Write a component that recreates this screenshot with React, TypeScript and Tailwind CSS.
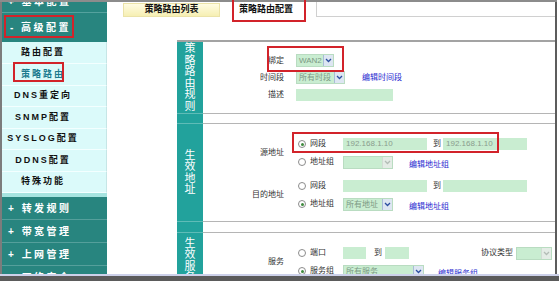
import React from "react";

const SUBMENU = [
  { label: "路由配置", h: "h-[22px]" },
  { label: "策略路由", h: "h-[22px]", active: true },
  { label: "DNS重定向", h: "h-[21px]" },
  { label: "SNMP配置", h: "h-[22px]" },
  { label: "SYSLOG配置", h: "h-[21px]" },
  { label: "DDNS配置", h: "h-[22px]" },
  { label: "特殊功能", h: "h-[21px]" },
];

const BOTTOM_MENU = ["转发规则", "带宽管理", "上网管理", "网络安全"];

function Chevron({ disabled }: { disabled?: boolean }) {
  return (
    <svg width="7" height="5" viewBox="0 0 7 5">
      <path
        d="M1 1l2.5 2.5L6 1"
        stroke={disabled ? "#b3bdb6" : "#2c4ea0"}
        strokeWidth="1.3"
        fill="none"
      />
    </svg>
  );
}

function Select({ text = "", className, disabled }: { text?: string; className: string; disabled?: boolean }) {
  return (
    <div className={`flex h-[13px] items-stretch border border-[#b9dcc1] bg-[#c9edd1] ${className}`}>
      <span className="flex-1 overflow-hidden whitespace-nowrap pl-[2px] text-[8px] leading-[11px] text-[#7c9984]">
        {text}
      </span>
      <span
        className={`flex w-[10px] items-center justify-center border-l ${
          disabled ? "border-[#d2dcd4] bg-[#e4ece6]" : "border-[#a9bcd8] bg-[#dde6f2]"
        }`}
      >
        <Chevron disabled={disabled} />
      </span>
    </div>
  );
}

function Input({ text = "", className }: { text?: string; className: string }) {
  return (
    <div className={`h-[12px] bg-[#c9edd1] pl-[3px] text-[8px] leading-[12px] text-[#8a9c8e] ${className}`}>{text}</div>
  );
}

function Radio({ checked, label }: { checked?: boolean; label: string }) {
  return (
    <div className="flex w-[47px] shrink-0 items-center">
      <span className="ml-[2px] flex h-[8px] w-[8px] items-center justify-center rounded-full border border-[#8c8c8c] bg-white">
        {checked && <span className="h-[3px] w-[3px] rounded-full bg-[#3f8a3f]" />}
      </span>
      <span className="ml-[4px] text-[8px] text-[#333]">{label}</span>
    </div>
  );
}

function Link({ children }: { children: React.ReactNode }) {
  return <span className="text-[8px] text-[#2a2ad0]">{children}</span>;
}

function Label({ children }: { children: React.ReactNode }) {
  return <div className="w-[81px] shrink-0 self-center text-right text-[8px] text-[#333]">{children}</div>;
}

function Section({
  title,
  height,
  children,
}: {
  title: string;
  height: string;
  children?: React.ReactNode;
}) {
  return (
    <div className={`flex ${height}`}>
      <div className="flex w-[26px] shrink-0 flex-col items-center justify-center border-b border-[#5fbcb7] bg-[#22a29c]">
        {title.split("").map((c, i) => (
          <span key={i} className="text-[11px] leading-[11.5px] text-white">
            {c}
          </span>
        ))}
      </div>
      <div className="flex-1 overflow-hidden border-b border-[#b5b5b5]">{children}</div>
    </div>
  );
}

function Sidebar() {
  return (
    <div className="flex w-[107px] shrink-0 flex-col border-l-2 border-[#7c7c7c] font-bold">
      <div className="-mt-[12px] flex h-[23px] shrink-0 items-center border-b border-[#55a29e] bg-[#28857f] pl-[6px] text-[10px] tracking-[2.5px] text-white">
        + 基本配置
      </div>
      <div className="flex h-[29px] shrink-0 items-center bg-[#28857f] pl-[8px] text-[10px] tracking-[2.5px] text-white">
        - 高级配置
      </div>
      {SUBMENU.map(item => (
        <div
          key={item.label}
          className={`flex ${item.h} shrink-0 items-center border-b border-r border-b-[#f3ffff] border-r-[#c6e6e6] bg-[#dbfafa]`}
        >
          <span
            className={`w-[82px] text-center text-[9px] tracking-[2px] ${
              item.active ? "text-[#1b7a8e]" : "text-[#111]"
            }`}
          >
            {item.label}
          </span>
        </div>
      ))}
      <div className="h-[4px] shrink-0 bg-[#a6e4e0]" />
      {BOTTOM_MENU.map(m => (
        <div
          key={m}
          className="flex h-[23px] shrink-0 items-center border-b border-[#559f9b] bg-[#28857f] pl-[6px] text-[10px] tracking-[2.5px] text-white"
        >
          + {m}
        </div>
      ))}
    </div>
  );
}

function Main() {
  return (
    <div className="flex w-[448px] shrink-0 flex-col">
      {/* Tabs */}
      <div className="flex h-[15px] shrink-0">
        <div className="w-[16px]" />
        <div className="mt-[1px] flex w-[97px] items-center justify-center border border-[#ebe3a8] bg-linear-to-b from-[#fffce2] to-[#f6efb3] text-[9px] font-bold text-[#111]">
          策略路由列表
        </div>
        <div className="w-[13px]" />
        <div className="flex w-[84px] items-center border-l border-r border-[#d0d0d0] pl-[5px] text-[9px] font-bold text-[#111]">
          策略路由配置
        </div>
        <div className="flex-1 border-b border-[#d0d0d0]" />
      </div>

      {/* Table */}
      <div className="ml-[70px] mt-[23px] border-t-2 border-[#a3a3a3]">
        <Section title="策略路由规则" height="h-[72px]">
          <div className="flex flex-col pt-[10px]">
            <div className="flex h-[17px] items-center">
              <Label>绑定</Label>
              <div className="ml-[12px]">
                <Select text="WAN2" className="w-[38px]" />
              </div>
            </div>
            <div className="flex h-[17px] items-center">
              <Label>时间段</Label>
              <div className="ml-[12px] flex items-center gap-[17px]">
                <Select text="所有时段" className="w-[49px]" />
                <Link>编辑时间段</Link>
              </div>
            </div>
            <div className="flex h-[17px] items-center">
              <Label>描述</Label>
              <div className="ml-[12px]">
                <Input className="w-[97px]" />
              </div>
            </div>
          </div>
        </Section>
        <Section title="" height="h-[10px]" />
        <Section title="生效地址" height="h-[98px]">
          <div className="flex flex-col pt-[11px]">
            <div className="flex">
              <Label>源地址</Label>
              <div className="ml-[12px] flex flex-col">
                <div className="flex h-[18px] items-center">
                  <Radio checked label="网段" />
                  <Input text="192.168.1.10" className="w-[84px]" />
                  <span className="ml-[6px] w-[10px] text-[8px] text-[#333]">到</span>
                  <Input text="192.168.1.10" className="w-[84px]" />
                </div>
                <div className="flex h-[18px] items-center">
                  <Radio label="地址组" />
                  <Select disabled className="w-[50px]" />
                  <span className="ml-[16px]">
                    <Link>编辑地址组</Link>
                  </span>
                </div>
              </div>
            </div>
            <div className="mt-[6px] flex">
              <Label>目的地址</Label>
              <div className="ml-[12px] flex flex-col">
                <div className="flex h-[18px] items-center">
                  <Radio label="网段" />
                  <Input className="w-[84px]" />
                  <span className="ml-[6px] w-[10px] text-[8px] text-[#333]">到</span>
                  <Input className="w-[84px]" />
                </div>
                <div className="flex h-[18px] items-center">
                  <Radio checked label="地址组" />
                  <Select text="所有地址" className="w-[50px]" />
                  <span className="ml-[16px]">
                    <Link>编辑地址组</Link>
                  </span>
                </div>
              </div>
            </div>
          </div>
        </Section>
        <Section title="" height="h-[11px]" />
        <Section title="生效服务" height="h-[56px]">
          <div className="flex pt-[11px]">
            <Label>服务</Label>
            <div className="ml-[12px] flex flex-1 flex-col pr-[3px]">
              <div className="flex h-[18px] items-center">
                <Radio label="端口" />
                <Input className="w-[23px]" />
                <span className="ml-[8px] w-[11px] text-[8px] text-[#333]">到</span>
                <Input className="w-[24px]" />
                <span className="ml-auto text-[8px] text-[#333]">协议类型</span>
                <span className="ml-[3px]">
                  <Select disabled className="w-[36px]" />
                </span>
              </div>
              <div className="flex h-[18px] items-center">
                <Radio checked label="服务组" />
                <Select text="所有服务" className="w-[81px]" />
                <span className="ml-[14px]">
                  <Link>编辑服务组</Link>
                </span>
              </div>
            </div>
          </div>
        </Section>
      </div>
    </div>
  );
}

export default function App() {
  return (
    <div className="relative flex h-[281px] w-[559px] flex-col overflow-hidden bg-white font-[Liberation_Sans,Noto_Sans_CJK_SC,sans-serif]">
      <div className="h-[2px] w-[557px] shrink-0 bg-[#8c8c8c]" />
      <div className="flex h-[272px] shrink-0 overflow-hidden">
        <Sidebar />
        <Main />
        <div className="w-[2px] shrink-0 bg-[#5c5c5c]" />
        <div className="w-[2px] shrink-0" />
      </div>
      <div className="h-[2px] shrink-0 bg-[#cdd1ea]" />
      <div className="h-[5px] shrink-0 bg-[#5b5b5b]" />

      {/* red annotation boxes */}
      <div className="absolute left-[4px] top-[15px] h-[23px] w-[70px] border-2 border-[#d2232a]" />
      <div className="absolute left-[13px] top-[62px] h-[20px] w-[51px] border-2 border-[#d2232a]" />
      <div className="absolute left-[232px] top-[-2px] h-[24px] w-[74px] border-2 border-[#d2232a]" />
      <div className="absolute left-[267px] top-[46px] h-[26px] w-[77px] border-2 border-[#d2232a]" />
      <div className="absolute left-[292px] top-[132px] h-[21px] w-[207px] border-2 border-[#d2232a]" />
    </div>
  );
}
